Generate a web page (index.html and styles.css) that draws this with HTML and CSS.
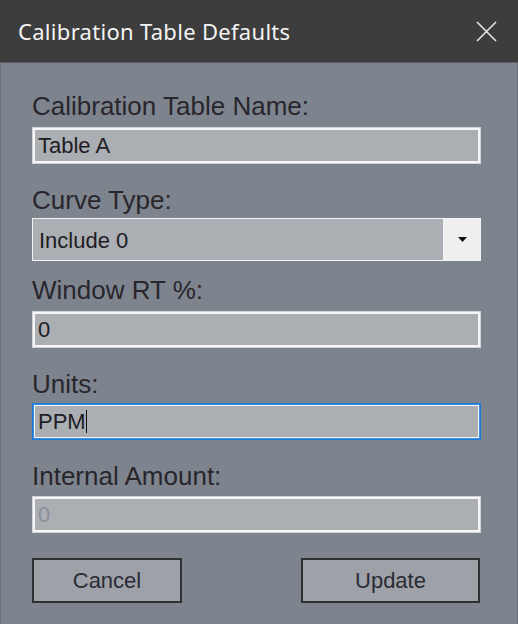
FILE: index.html
```html
<!DOCTYPE html>
<html lang="en">

<head>
    <meta charset="UTF-8">
    <meta name="viewport" content="width=device-width, initial-scale=1.0">
    <title>Calibration Table Defaults</title>

    <link rel="stylesheet" href="styles.css">

</head>

<body>
    <div class="window">

        <div class="title-bar">
            <span class="title">Calibration Table Defaults</span>
            <svg class="close" width="21" height="21" viewBox="0 0 21 21">
                <path d="M1 1 L20 20 M20 1 L1 20" stroke="#e6e6e6" stroke-width="1.6" fill="none" />
            </svg>
        </div>

        <div class="content">
            <label class="field-label label-name">Calibration Table Name:</label>
            <div class="field field-name">Table A</div>

            <label class="field-label label-curve">Curve Type:</label>
            <div class="combo">
                <div class="combo-text">Include 0</div>
                <div class="combo-btn">
                    <svg width="9" height="5" viewBox="0 0 9 5">
                        <path d="M0 0 L9 0 L4.5 5 Z" fill="#111" />
                    </svg>
                </div>
            </div>

            <label class="field-label label-window">Window RT %:</label>
            <div class="field field-window">0</div>

            <label class="field-label label-units">Units:</label>
            <div class="field field-units focused">PPM<span class="caret"></span></div>

            <label class="field-label label-amount">Internal Amount:</label>
            <div class="field field-amount disabled">0</div>

            <div class="buttons">
                <button class="btn btn-cancel">Cancel</button>
                <button class="btn btn-update">Update</button>
            </div>
        </div>

    </div>
</body>

</html>
```

FILE: styles.css
```css
* {
    margin: 0;
    padding: 0;
    box-sizing: border-box;
}

body {
    width: 518px;
    height: 624px;
    background: #7e848e;
    font-family: "Liberation Sans", Arial, sans-serif;
    overflow: hidden;
}

.window {
    width: 518px;
    height: 624px;
    display: flex;
    flex-direction: column;
}

.title-bar {
    height: 63px;
    background: #3d3d3d;
    border-bottom: 1px solid #5a5d62;
    display: flex;
    align-items: center;
    justify-content: space-between;
    padding: 0 21px 0 18px;
}

.title {
    font-family: "Noto Sans", "Open Sans", sans-serif;
    font-size: 22px;
    color: #f4f4f4;
    letter-spacing: 0.3px;
}

.close {
    display: block;
}

.content {
    flex: 1;
    border-left: 1px solid #6c7179;
    border-right: 1px solid #6c7179;
    padding: 28px 36px 0 31px;
    display: flex;
    flex-direction: column;
}

.field-label {
    display: block;
    font-size: 26px;
    line-height: 30px;
    color: #28262c;
}

.field {
    height: 37px;
    background: #abaeb3;
    border: 1px solid #d2d3d5;
    box-shadow: inset 0 0 0 2px #f6f6f6;
    font-size: 22px;
    line-height: 35px;
    padding-left: 5px;
    color: #1e1c24;
}

.field.focused {
    border-color: #1a78d6;
    box-shadow: inset 0 0 0 1px #3d8de0, inset 0 0 0 2px #f6f6f6;
}

.field.disabled {
    color: #8c9098;
}

.caret {
    display: inline-block;
    width: 1px;
    height: 23px;
    background: #111;
    vertical-align: -4px;
}

.label-name {
    margin-bottom: 6px;
}

.label-curve {
    margin-top: 21px;
    margin-bottom: 3px;
}

.combo {
    height: 43px;
    display: flex;
    border: 1px solid #f2f2f2;
    background: #f2f2f2;
}

.combo-text {
    flex: 1;
    background: #abaeb3;
    font-size: 22px;
    line-height: 41px;
    padding: 1px 0 0 6px;
    color: #1e1c24;
}

.combo-btn {
    width: 36px;
    margin-left: 1px;
    background: #efefef;
    display: flex;
    align-items: center;
    justify-content: center;
}

.combo-btn svg {
    display: block;
}

.label-window {
    margin-top: 14px;
    margin-bottom: 6px;
}

.label-units {
    margin-top: 21px;
    margin-bottom: 4px;
}

.label-amount {
    margin-top: 21px;
    margin-bottom: 5px;
}

.buttons {
    margin-top: 25px;
    display: flex;
    justify-content: space-between;
    padding-right: 1px;
}

.btn {
    height: 45px;
    background: #9ea1a7;
    border: 2px solid #2e2f31;
    font-family: "Liberation Sans", Arial, sans-serif;
    font-size: 22px;
    color: #2a2c36;
}

.btn-cancel {
    width: 150px;
}

.btn-update {
    width: 179px;
}
```
